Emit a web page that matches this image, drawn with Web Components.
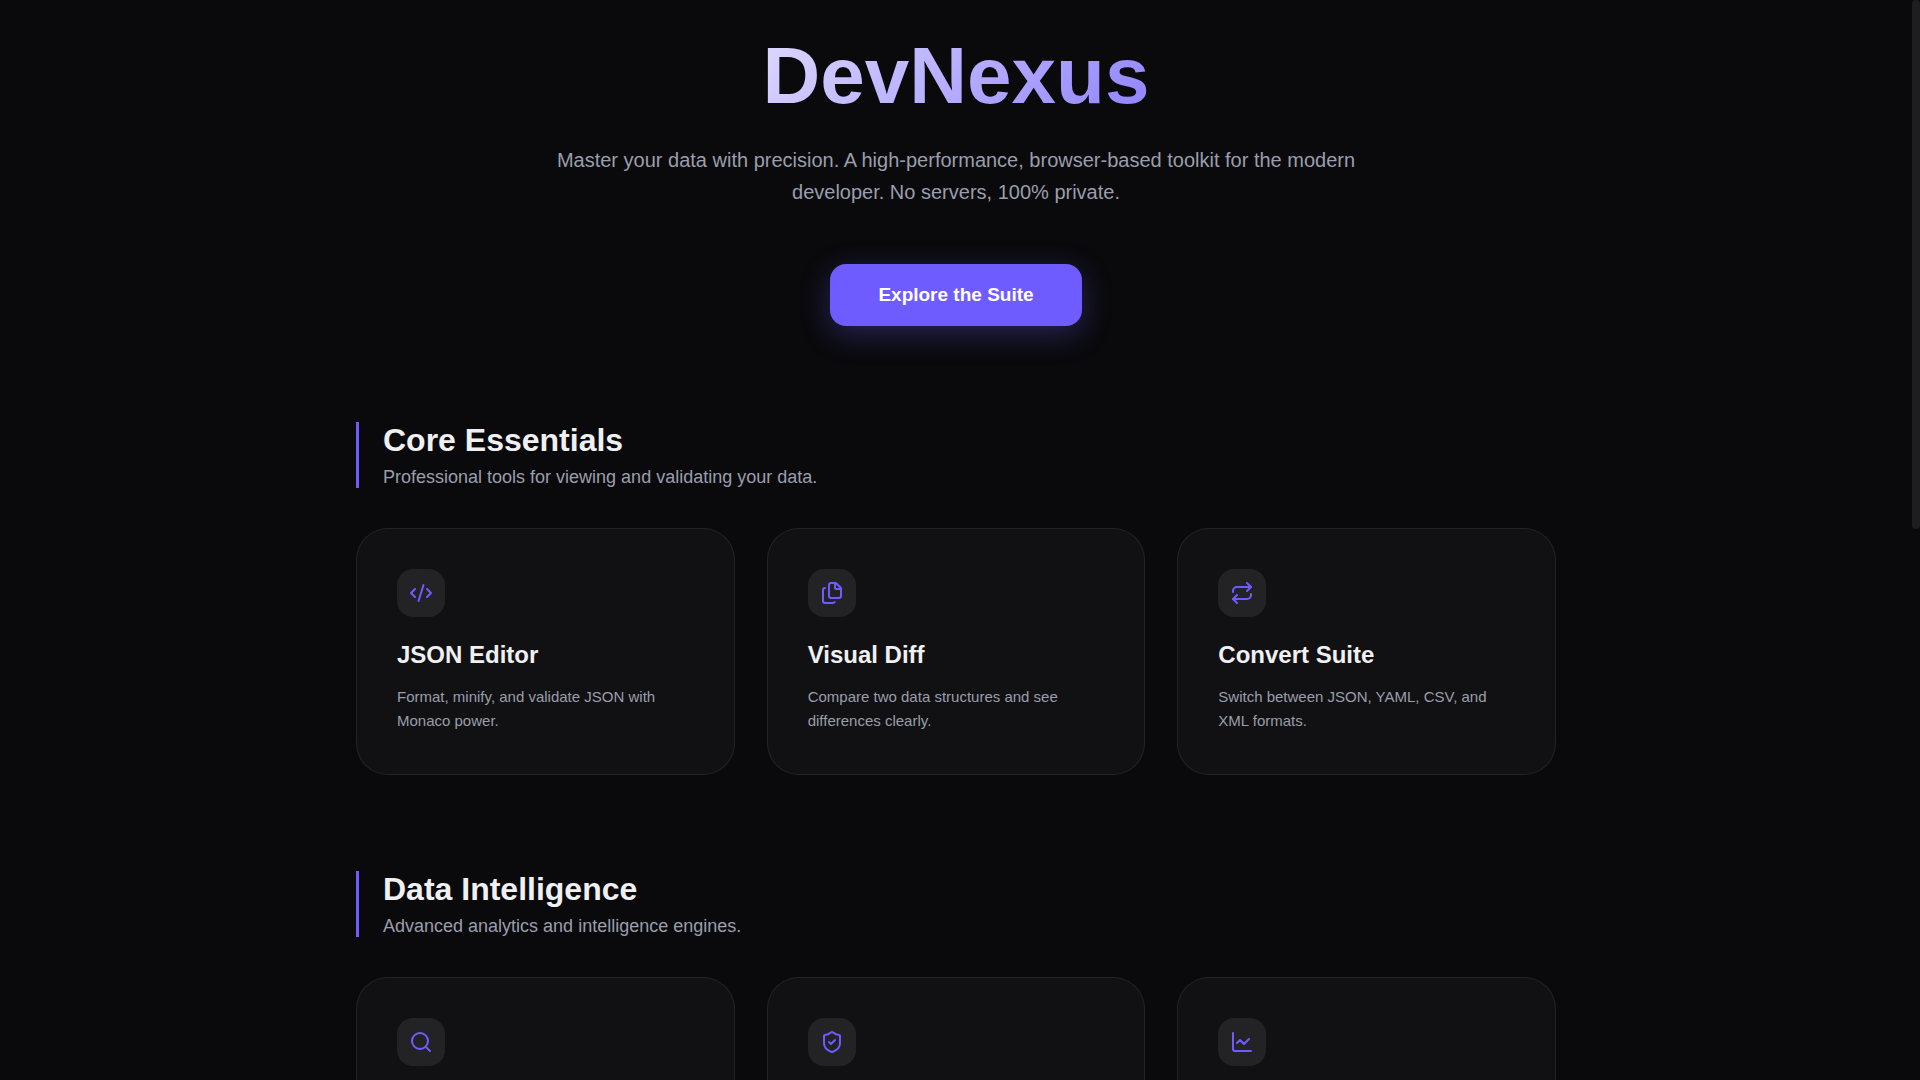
<!DOCTYPE html>
<html lang="en">
<head>
<meta charset="utf-8">
<meta name="viewport" content="width=device-width, initial-scale=1">
<title>DevNexus</title>
<style>
  html, body {
    margin: 0;
    height: 100%;
  }
  body {
    --bg: #0a0a0c;
    --accent: #6e5cff;
    --text: #f0f0f2;
    --muted: #9a9eac;
    background: var(--bg);
    color: var(--text);
    font-family: "Liberation Sans", Arial, sans-serif;
    overflow: hidden;
  }
</style>
</head>
<body>

<nexus-app>
  <nexus-hero heading="DevNexus" action="Explore the Suite">
    Master your data with precision. A high-performance, browser-based toolkit for the modern developer. No servers, 100% private.
  </nexus-hero>
  <nexus-section id="suite" heading="Core Essentials" subtitle="Professional tools for viewing and validating your data.">
    <nexus-card icon="code" heading="JSON Editor">Format, minify, and validate JSON with Monaco power.</nexus-card>
    <nexus-card icon="files" heading="Visual Diff">Compare two data structures and see differences clearly.</nexus-card>
    <nexus-card icon="repeat" heading="Convert Suite">Switch between JSON, YAML, CSV, and XML formats.</nexus-card>
  </nexus-section>
  <nexus-section heading="Data Intelligence" subtitle="Advanced analytics and intelligence engines.">
    <nexus-card icon="search"></nexus-card>
    <nexus-card icon="shield"></nexus-card>
    <nexus-card icon="chart"></nexus-card>
  </nexus-section>
</nexus-app>

<template id="app-template">
  <style>
    :host {
      display: flex;
      height: 100vh;
    }
    .view {
      flex: 1;
      min-width: 0;
      overflow-x: hidden;
      overflow-y: auto;
      scrollbar-width: none;
    }
    .bar {
      flex: none;
      width: 8px;
    }
    .thumb {
      height: 49%;
      border-radius: 4px;
      background: #1e1e20;
    }
    main {
      box-sizing: border-box;
      max-width: 1264px;
      margin: 0 auto;
      padding: 32px;
      display: flex;
      flex-direction: column;
      gap: 96px;
    }
  </style>
  <div class="view">
    <main><slot></slot></main>
  </div>
  <div class="bar" aria-hidden="true"><div class="thumb"></div></div>
</template>

<template id="hero-template">
  <style>
    :host {
      display: flex;
      flex-direction: column;
      align-items: center;
      text-align: center;
    }
    h1 {
      width: 100%;
      max-width: 800px;
      margin: 0 0 24px;
      font-size: 80px;
      line-height: 88px;
      font-weight: 800;
      background: linear-gradient(135deg, #ffffff 0%, var(--accent) 100%);
      -webkit-background-clip: text;
      background-clip: text;
      color: transparent;
    }
    p {
      margin: 0 0 56px;
      max-width: 800px;
      font-size: 20px;
      line-height: 32px;
      color: var(--muted);
    }
    button {
      border: 0;
      border-radius: 16px;
      padding: 20px 48px;
      background: var(--accent);
      color: #fff;
      font: bold 19px/22px "Liberation Sans", Arial, sans-serif;
      box-shadow: 0 8px 30px rgba(110, 92, 255, .3);
      cursor: pointer;
    }
  </style>
  <h1></h1>
  <p><slot></slot></p>
  <button type="button"></button>
</template>

<template id="section-template">
  <style>
    :host {
      display: block;
    }
    header {
      border-left: 3px solid var(--accent);
      padding-left: 24px;
      margin-bottom: 40px;
    }
    h2 {
      margin: 0 0 8px;
      font-size: 32px;
      line-height: 37px;
    }
    p {
      margin: 0;
      font-size: 18px;
      line-height: 21px;
      color: var(--muted);
    }
    .grid {
      display: grid;
      grid-template-columns: repeat(auto-fit, minmax(320px, 1fr));
      gap: 32px;
    }
  </style>
  <header>
    <h2></h2>
    <p></p>
  </header>
  <div class="grid"><slot></slot></div>
</template>

<template id="card-template">
  <style>
    :host {
      display: block;
      box-sizing: border-box;
      min-height: 247px;
      padding: 40px;
      border: 1px solid rgba(255, 255, 255, .08);
      border-radius: 32px;
      background: rgba(255, 255, 255, .03);
    }
    .icon {
      display: flex;
      align-items: center;
      justify-content: center;
      width: 48px;
      height: 48px;
      margin-bottom: 24px;
      border-radius: 16px;
      background: #232325;
    }
    svg {
      width: 24px;
      height: 24px;
      fill: none;
      stroke: var(--accent);
      stroke-width: 2;
      stroke-linecap: round;
      stroke-linejoin: round;
    }
    h3 {
      margin: 0 0 16px;
      font-size: 24px;
      line-height: 28px;
    }
    p {
      margin: 0;
      font-size: 15px;
      line-height: 24px;
      color: var(--muted);
    }
  </style>
  <div class="icon"><svg viewBox="0 0 24 24" aria-hidden="true"></svg></div>
  <h3></h3>
  <p><slot></slot></p>
</template>

<script>
const icons = {
  code: '<path d="m18 16 4-4-4-4"/><path d="m6 8-4 4 4 4"/><path d="m14.5 4-5 16"/>',
  files: '<path d="M15 2h-4a2 2 0 0 0-2 2v11a2 2 0 0 0 2 2h8a2 2 0 0 0 2-2V8"/><path d="M16.706 2.706A2.4 2.4 0 0 0 15 2v5a1 1 0 0 0 1 1h5a2.4 2.4 0 0 0-.706-1.706z"/><path d="M5 7a2 2 0 0 0-2 2v11a2 2 0 0 0 2 2h8a2 2 0 0 0 1.732-1"/>',
  repeat: '<path d="m17 2 4 4-4 4"/><path d="M3 11v-1a4 4 0 0 1 4-4h14"/><path d="m7 22-4-4 4-4"/><path d="M21 13v1a4 4 0 0 1-4 4H3"/>',
  search: '<circle cx="11" cy="11" r="8"/><path d="m21 21-4.34-4.34"/>',
  shield: '<path d="M20 13c0 5-3.5 7.5-7.66 8.95a1 1 0 0 1-.67-.01C7.5 20.5 4 18 4 13V6a1 1 0 0 1 1-1c2 0 4.5-1.2 6.24-2.72a1.17 1.17 0 0 1 1.52 0C14.51 3.81 17 5 19 5a1 1 0 0 1 1 1z"/><path d="m9 12 2 2 4-4"/>',
  chart: '<path d="M3 3v16a2 2 0 0 0 2 2h16"/><path d="m19 9-5 5-4-4-3 3"/>'
};

/**
 * Base class: clones the given template into an open shadow root
 */
class NexusElement extends HTMLElement {
  constructor (templateId) {
    super();
    this._shadowRoot = this.attachShadow({mode: 'open'});
    this._shadowRoot.appendChild(document.getElementById(templateId).content.cloneNode(true));
  }
  setText (selector, value) {
    this._shadowRoot.querySelector(selector).textContent = value || '';
  }
}

/**
 * @class NexusApp
 */
class NexusApp extends NexusElement {
  constructor () {
    super('app-template');
  }
}

/**
 * @class NexusHero
 */
class NexusHero extends NexusElement {
  constructor () {
    super('hero-template');
  }
  connectedCallback () {
    this.setText('h1', this.getAttribute('heading'));
    this.setText('button', this.getAttribute('action'));
    this._shadowRoot.querySelector('button').addEventListener('click', () => {
      document.getElementById('suite').scrollIntoView({behavior: 'smooth'});
    });
  }
}

/**
 * @class NexusSection
 */
class NexusSection extends NexusElement {
  constructor () {
    super('section-template');
  }
  connectedCallback () {
    this.setText('h2', this.getAttribute('heading'));
    this.setText('p', this.getAttribute('subtitle'));
  }
}

/**
 * @class NexusCard
 */
class NexusCard extends NexusElement {
  constructor () {
    super('card-template');
  }
  connectedCallback () {
    this.setText('h3', this.getAttribute('heading'));
    this._shadowRoot.querySelector('svg').innerHTML = icons[this.getAttribute('icon')];
  }
}

// Register
customElements.define('nexus-app', NexusApp);
customElements.define('nexus-hero', NexusHero);
customElements.define('nexus-section', NexusSection);
customElements.define('nexus-card', NexusCard);
</script>
</body>
</html>
